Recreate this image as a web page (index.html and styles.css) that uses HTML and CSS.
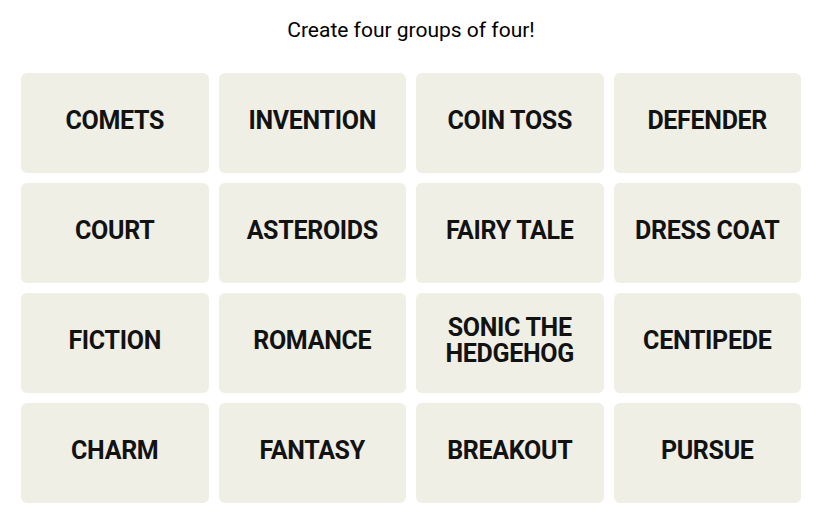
FILE: index.html
```html
<!DOCTYPE html>
<html lang="en">
<head>
    <meta charset="UTF-8">
    <meta name="viewport" content="width=device-width, initial-scale=1.0">
    <title>Connections</title>
    <link rel="stylesheet" href="styles.css">
</head>
<body>
    <div class="game">
        <p class="prompt">Create four groups of four!</p>

        <!-- Word board -->
        <div class="board">
            <button class="tile">COMETS</button>
            <button class="tile">INVENTION</button>
            <button class="tile">COIN TOSS</button>
            <button class="tile">DEFENDER</button>

            <button class="tile">COURT</button>
            <button class="tile">ASTEROIDS</button>
            <button class="tile">FAIRY TALE</button>
            <button class="tile">DRESS COAT</button>

            <button class="tile">FICTION</button>
            <button class="tile">ROMANCE</button>
            <button class="tile">SONIC THE<br>HEDGEHOG</button>
            <button class="tile">CENTIPEDE</button>

            <button class="tile">CHARM</button>
            <button class="tile">FANTASY</button>
            <button class="tile">BREAKOUT</button>
            <button class="tile">PURSUE</button>
        </div>
    </div>
</body>
</html>
```

FILE: styles.css
```css
body {
    font-family: Roboto, "Liberation Sans", sans-serif;
    background-color: #fff;
    color: #000;
    margin: 0;
}
.game {
    width: 780px;
    margin-left: 21px;
    padding-top: 18px;
}
.prompt {
    margin: 0 0 31px;
    height: 24px;
    line-height: 24px;
    font-size: 21px;
    text-align: center;
}
.board {
    display: grid;
    grid-template-columns: repeat(4, 1fr);
    grid-auto-rows: 100px;
    gap: 10px;
}
.tile {
    background-color: #efefe6;
    border: none;
    border-radius: 6px;
    font-family: inherit;
    font-size: 25px;
    font-weight: 700;
    line-height: 26px;
    letter-spacing: -0.3px;
    color: #121212;
    padding: 0 0 4px;
    cursor: pointer;
}
```
